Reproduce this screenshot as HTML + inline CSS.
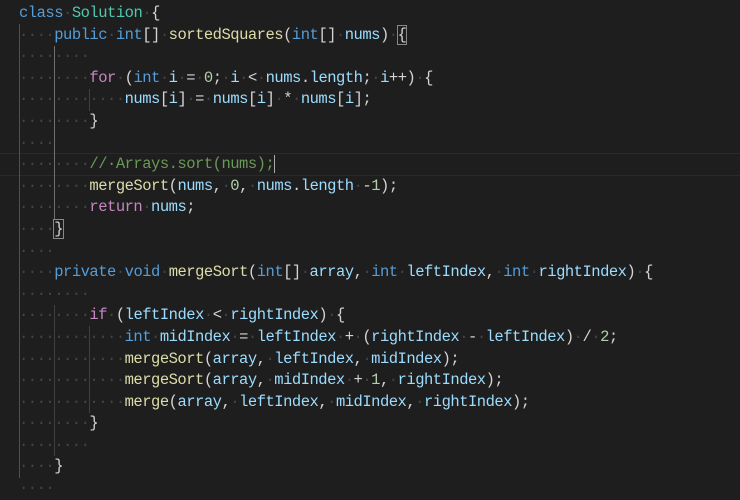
<!DOCTYPE html>
<html><head><meta charset="utf-8"><style>
html,body{margin:0;padding:0;background:#1e1e1e;width:740px;height:496px;overflow:hidden}
#c{position:absolute;left:19px;top:3px;font-family:"Liberation Mono",monospace;font-size:15.5px;letter-spacing:-0.5px;line-height:21.6px;color:#d4d4d4;white-space:pre}
.d{color:#444}.k{color:#569cd6}.t{color:#4ec9b0}.f{color:#dcdcaa}.v{color:#9cdcfe}.c{color:#c586c0}.m{color:#6a9955}.n{color:#b5cea8}
.g{position:absolute;width:1px;background:#404040}
.hl{position:absolute;left:0;width:740px;top:153px;height:21px;border-top:1px solid #2a2a2a;border-bottom:1px solid #2a2a2a}
.br{outline:1px solid #888}
</style></head><body>
<div class="hl"></div>
<div class="g" style="left:19px;top:24px;height:454px;background:#505050"></div>
<div class="g" style="left:54px;top:46px;height:173px;background:#707070"></div>
<div class="g" style="left:54px;top:305px;height:151px"></div>
<div class="g" style="left:89px;top:89px;height:22px"></div>
<div class="g" style="left:89px;top:326px;height:87px"></div>
<div id="c"><span class="k">class</span><span class="d">·</span><span class="t">Solution</span><span class="d">·</span>{
<span class="d">····</span><span class="k">public</span><span class="d">·</span><span class="k">int</span>[]<span class="d">·</span><span class="f">sortedSquares</span>(<span class="k">int</span>[]<span class="d">·</span><span class="v">nums</span>)<span class="d">·</span><span class="br">{</span>
<span class="d">········</span>
<span class="d">········</span><span class="c">for</span><span class="d">·</span>(<span class="k">int</span><span class="d">·</span><span class="v">i</span><span class="d">·</span>=<span class="d">·</span><span class="n">0</span>;<span class="d">·</span><span class="v">i</span><span class="d">·</span>&lt;<span class="d">·</span><span class="v">nums</span>.<span class="v">length</span>;<span class="d">·</span><span class="v">i</span>++)<span class="d">·</span>{
<span class="d">············</span><span class="v">nums</span>[<span class="v">i</span>]<span class="d">·</span>=<span class="d">·</span><span class="v">nums</span>[<span class="v">i</span>]<span class="d">·</span>*<span class="d">·</span><span class="v">nums</span>[<span class="v">i</span>];
<span class="d">········</span>}
<span class="d">····</span>
<span class="d">········</span><span class="m">//·Arrays.sort(nums);</span><span style="border-left:1px solid #aaa"></span>
<span class="d">········</span><span class="f">mergeSort</span>(<span class="v">nums</span>,<span class="d">·</span><span class="n">0</span>,<span class="d">·</span><span class="v">nums</span>.<span class="v">length</span><span class="d">·</span>-<span class="n">1</span>);
<span class="d">········</span><span class="c">return</span><span class="d">·</span><span class="v">nums</span>;
<span class="d">····</span><span class="br">}</span>
<span class="d">····</span>
<span class="d">····</span><span class="k">private</span><span class="d">·</span><span class="k">void</span><span class="d">·</span><span class="f">mergeSort</span>(<span class="k">int</span>[]<span class="d">·</span><span class="v">array</span>,<span class="d">·</span><span class="k">int</span><span class="d">·</span><span class="v">leftIndex</span>,<span class="d">·</span><span class="k">int</span><span class="d">·</span><span class="v">rightIndex</span>)<span class="d">·</span>{
<span class="d">········</span>
<span class="d">········</span><span class="c">if</span><span class="d">·</span>(<span class="v">leftIndex</span><span class="d">·</span>&lt;<span class="d">·</span><span class="v">rightIndex</span>)<span class="d">·</span>{
<span class="d">············</span><span class="k">int</span><span class="d">·</span><span class="v">midIndex</span><span class="d">·</span>=<span class="d">·</span><span class="v">leftIndex</span><span class="d">·</span>+<span class="d">·</span>(<span class="v">rightIndex</span><span class="d">·</span>-<span class="d">·</span><span class="v">leftIndex</span>)<span class="d">·</span>/<span class="d">·</span><span class="n">2</span>;
<span class="d">············</span><span class="f">mergeSort</span>(<span class="v">array</span>,<span class="d">·</span><span class="v">leftIndex</span>,<span class="d">·</span><span class="v">midIndex</span>);
<span class="d">············</span><span class="f">mergeSort</span>(<span class="v">array</span>,<span class="d">·</span><span class="v">midIndex</span><span class="d">·</span>+<span class="d">·</span><span class="n">1</span>,<span class="d">·</span><span class="v">rightIndex</span>);
<span class="d">············</span><span class="f">merge</span>(<span class="v">array</span>,<span class="d">·</span><span class="v">leftIndex</span>,<span class="d">·</span><span class="v">midIndex</span>,<span class="d">·</span><span class="v">rightIndex</span>);
<span class="d">········</span>}
<span class="d">········</span>
<span class="d">····</span>}
<span class="d">····</span></div>
</body></html>
